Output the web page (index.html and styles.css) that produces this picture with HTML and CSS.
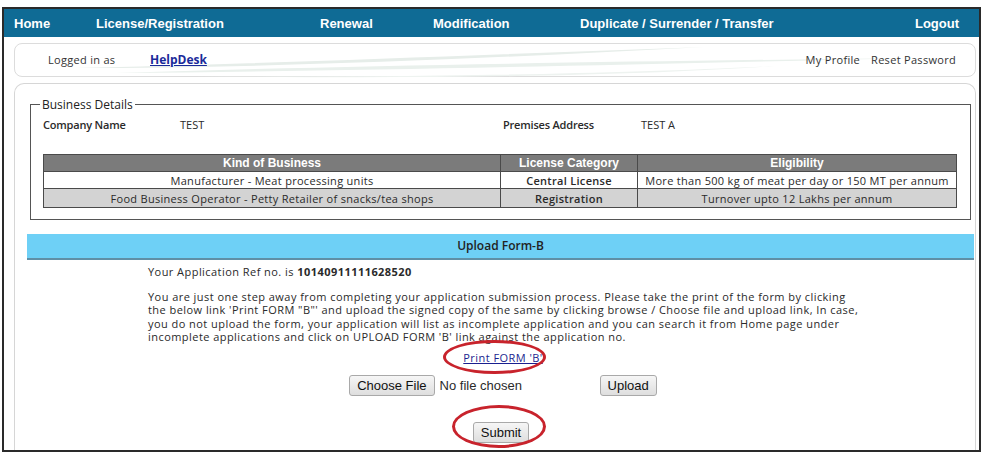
FILE: index.html
```html
<!DOCTYPE html>
<html>
<head>
<meta charset="utf-8">
<link rel="stylesheet" href="styles.css">
</head>
<body>
<div class="frame">
  <nav class="nav">
    <span>Home</span>
    <span>License/Registration</span>
    <span>Renewal</span>
    <span>Modification</span>
    <span>Duplicate / Surrender / Transfer</span>
    <span class="logout">Logout</span>
  </nav>
  <div class="userbar">
    <svg class="swoosh" width="960" height="34" viewBox="0 0 960 34">
      <path d="M60 24 C 250 20, 480 10, 690 3 C 480 14, 260 24, 60 24 Z" fill="#e6ede9"/>
      <path d="M100 29 C 320 22, 560 18, 900 14 C 560 22, 330 27, 100 29 Z" fill="#e9f0ec"/>
      <path d="M180 32 C 380 34, 600 30, 760 22 C 600 33, 380 35, 180 32 Z" fill="#eef3f0"/>
    </svg>
    <span class="logged">Logged in as</span>
    <a class="helpdesk" href="#">HelpDesk</a>
    <span class="spacer"></span>
    <span class="ulink">My Profile</span>
    <span class="ulink">Reset Password</span>
  </div>
  <div class="main">
    <fieldset class="biz">
      <legend>Business Details</legend>
      <div class="info">
        <b>Company Name</b><span>TEST</span>
        <b>Premises Address</b><span>TEST A</span>
      </div>
      <table class="kinds">
        <thead>
          <tr><th class="c1">Kind of Business</th><th class="c2">License Category</th><th>Eligibility</th></tr>
        </thead>
        <tbody>
          <tr class="r1"><td>Manufacturer - Meat processing units</td><td class="b">Central License</td><td>More than 500 kg of meat per day or 150 MT per annum</td></tr>
          <tr class="r2"><td>Food Business Operator - Petty Retailer of snacks/tea shops</td><td class="b">Registration</td><td>Turnover upto 12 Lakhs per annum</td></tr>
        </tbody>
      </table>
    </fieldset>
    <div class="upbar">Upload Form-B</div>
    <div class="content">
      <p class="ref">Your Application Ref no. is <b>10140911111628520</b></p>
      <p class="desc">You are just one step away from completing your application submission process. Please take the print of the form by clicking the below link 'Print FORM "B"' and upload the signed copy of the same by clicking browse / Choose file and upload link, In case, you do not upload the form, your application will list as incomplete application and you can search it from Home page under incomplete applications and click on UPLOAD FORM 'B' link against the application no.</p>
    </div>
    <div class="printrow"><span class="mark"><a href="#">Print FORM 'B'</a><span class="ellipse e1"></span></span></div>
    <div class="filerow">
      <span class="btn">Choose File</span><span class="nofile">No file chosen</span>
      <span class="btn upload">Upload</span>
    </div>
    <div class="submitrow"><span class="mark"><span class="btn">Submit</span><span class="ellipse e2"></span></span></div>
  </div>
</div>
</body>
</html>
```

FILE: styles.css
```css
html, body { margin: 0; padding: 0; background: #fff; }
body { font-family: "Open Sans", "Liberation Sans", sans-serif; font-size: 11px; color: #2a2a2a; }
.frame {
  margin: 7px 0 0 2px;
  width: 975px;
  height: 441px;
  border: 2px solid #2a2a2a;
  overflow: hidden;
}
.nav {
  height: 28px;
  background: #0f6b95;
  display: grid;
  grid-template-columns: 82px 224px 113px 147px 1fr auto;
  align-items: center;
  padding: 0 20px 0 10px;
  color: #fff;
  font-family: "Liberation Sans", Arial, sans-serif;
  font-weight: bold;
  font-size: 13px;
}
.userbar {
  position: relative;
  margin: 6px 3px 0 10px;
  height: 32px;
  border: 1px solid #dcdcdc;
  border-radius: 8px;
  display: flex;
  align-items: center;
  padding: 0 19px 0 33px;
  font-size: 11px;
  letter-spacing: 0.3px;
  color: #333;
}
.swoosh { position: absolute; left: 0; top: 0; z-index: 0; }
.userbar > span, .userbar > a { position: relative; z-index: 1; top: -1px; }
.logged { width: 102px; }
.helpdesk { color: #1a2a9a; font-weight: bold; font-size: 12px; letter-spacing: 0; }
.spacer { flex: 1; }
.ulink { margin-left: 11px; }
.main {
  margin: 6px 3px 0 10px;
  height: 400px;
  border: 1px solid #d6d6d6;
  border-bottom: none;
  border-radius: 10px 10px 0 0;
  padding-top: 12px;
}
.biz {
  margin: 0 4px 0 15px;
  border: 1px solid #555;
  padding: 4px 12px 11px 12px;
}
.biz legend {
  padding: 0 2px;
  margin-left: -3px;
  font-size: 12px;
  color: #222;
}
.info {
  display: grid;
  grid-template-columns: 137px 323px 138px 1fr;
  font-size: 11px;
  margin-bottom: 22px;
}
.info b { font-weight: 600; letter-spacing: -0.2px; }
.kinds {
  width: 914px;
  border-collapse: collapse;
  font-size: 11px;
  letter-spacing: 0.3px;
  text-align: center;
}
.kinds th, .kinds td { border: 1px solid #4a4a4a; padding: 0; }
.kinds th {
  background: #7b7b7b;
  color: #fff;
  font-family: "Liberation Sans", Arial, sans-serif;
  font-size: 12px;
  font-weight: bold;
  letter-spacing: 0;
  height: 16px;
}
.kinds .c1 { width: 456px; }
.kinds .c2 { width: 136px; }
.kinds .r1 td { background: #fff; height: 16px; }
.kinds .r2 td { background: #d3d3d3; height: 18px; }
.kinds .b { font-weight: 600; }
.upbar {
  margin: 14px 1px 0 12px;
  height: 24px;
  background: #6ed0f6;
  border-bottom: 2px solid #5f8fa6;
  text-align: center;
  line-height: 24px;
  font-weight: 600;
  font-size: 12px;
  color: #222;
}
.content { margin-left: 133px; width: 716px; letter-spacing: 0.45px; }
.ref { margin: 5px 0 0 0; line-height: 14px; }
.desc { margin: 11px 0 0 0; line-height: 13.4px; }
.printrow { text-align: center; margin-top: 7px; padding-left: 16px; line-height: 14px; letter-spacing: 0.45px; }
.printrow a { color: #1a1f8f; }
.mark { position: relative; display: inline-block; }
.ellipse {
  position: absolute;
  border: 3px solid #c8232c;
  border-radius: 50%;
  pointer-events: none;
  letter-spacing: 0;
}
.e1 { left: -20px; right: -3px; top: -11px; bottom: -9px; }
.e2 { left: -21px; right: -17px; top: -17px; bottom: -5px; }
.filerow {
  display: flex;
  justify-content: center;
  align-items: center;
  margin-top: 10px;
  padding-left: 16px;
  font-family: "Liberation Sans", Arial, sans-serif;
  font-size: 13px;
}
.btn {
  display: inline-block;
  box-sizing: border-box;
  height: 21px;
  line-height: 19px;
  padding: 0 7px;
  border: 1px solid #a9a9a9;
  border-radius: 3px;
  background: linear-gradient(#f6f6f6, #dedede);
  font-family: "Liberation Sans", Arial, sans-serif;
  font-size: 13px;
  color: #111;
}
.nofile { margin-left: 5px; width: 160px; }
.submitrow { text-align: center; margin-top: 26px; padding-left: 12px; }
```
